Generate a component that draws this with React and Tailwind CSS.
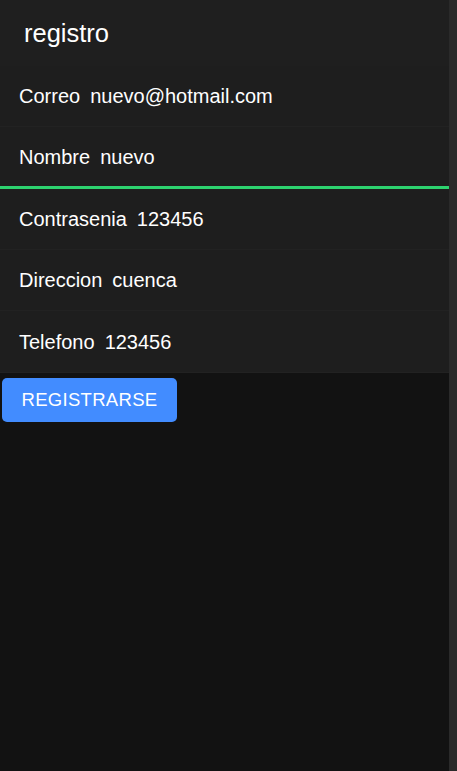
import React, { useState } from 'react';

const fields = [
  { key: 'correo', label: 'Correo', value: 'nuevo@hotmail.com' },
  { key: 'nombre', label: 'Nombre', value: 'nuevo', focused: true },
  { key: 'contrasenia', label: 'Contrasenia', value: '123456' },
  { key: 'direccion', label: 'Direccion', value: 'cuenca' },
  { key: 'telefono', label: 'Telefono', value: '123456' },
];

const App = () => {
  const [form, setForm] = useState(
    Object.fromEntries(fields.map((f) => [f.key, f.value]))
  );

  return (
    <div className="h-[771px] w-[457px] flex bg-[#121212] font-['Liberation_Sans',Arial,sans-serif] text-white overflow-hidden">
      <div className="flex-1 flex flex-col">
        {/* Header */}
        <header className="h-[66px] bg-[#1f1f1f] flex items-center px-6 shadow-[0_1px_0_#1a1a1a]">
          <h1 className="text-[25.5px]">registro</h1>
        </header>

        {/* Form */}
        <div className="flex flex-col">
          {fields.map((f, i) => (
            <div
              key={f.key}
              className={`flex items-center px-[19px] bg-[#1e1e1e] ${
                f.focused
                  ? 'h-[62px] border-b-[3px] border-[#2dd36f]'
                  : i === fields.length - 1
                  ? 'h-[62px] border-b border-[#222222]'
                  : 'h-[61px] border-b border-[#222222]'
              }`}
            >
              <span className="text-[20px] mr-[10px]">{f.label}</span>
              <input
                value={form[f.key]}
                autoFocus={f.focused}
                onChange={(e) => setForm({ ...form, [f.key]: e.target.value })}
                className="flex-1 bg-transparent outline-none text-[20px] text-white caret-white"
              />
            </div>
          ))}
        </div>

        <div className="pt-[5px] pl-[2px]">
          <button className="h-[44px] w-[175px] rounded-[5px] bg-[#428cff] text-white text-[18.5px] tracking-[0.3px]">
            REGISTRARSE
          </button>
        </div>
      </div>

      {/* Scrollbar strip */}
      <div className="w-[8px] bg-[#2a2a2a]" />
    </div>
  );
};

export default App;
